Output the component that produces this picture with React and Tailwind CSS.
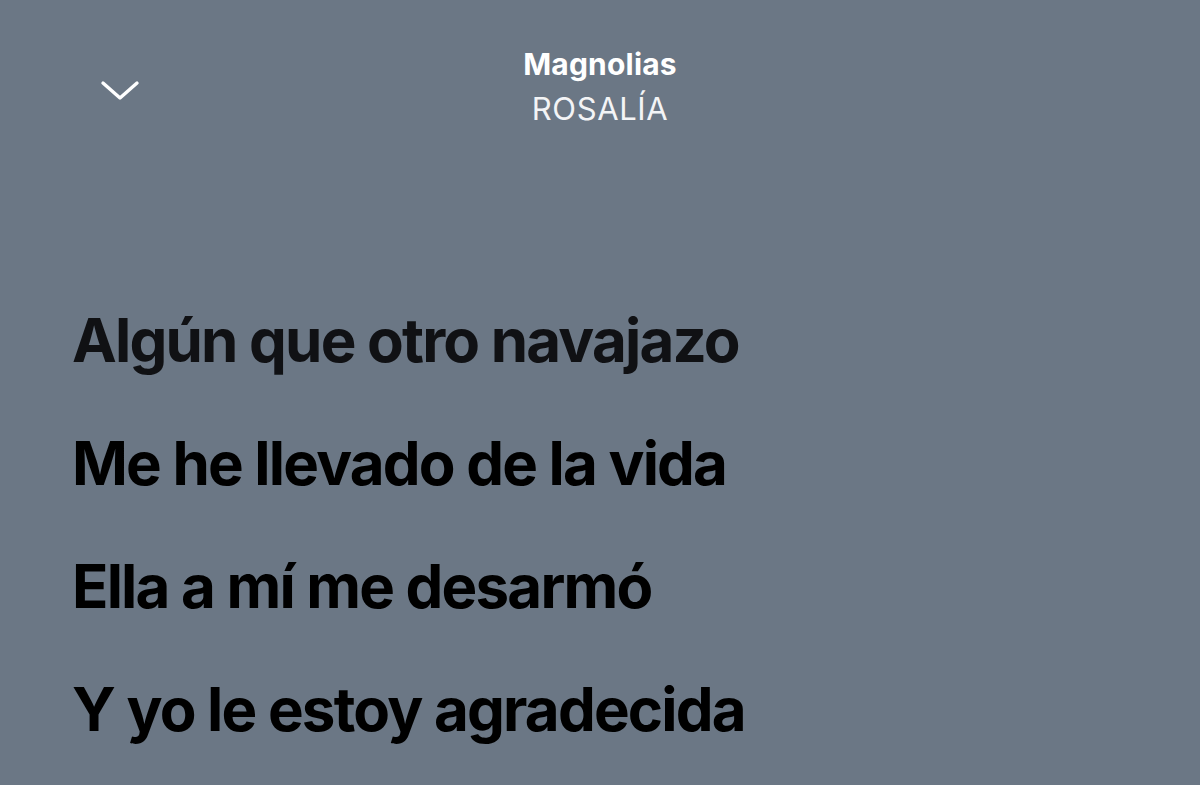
export default function App() {
  const lines = [
    "Algún que otro navajazo",
    "Me he llevado de la vida",
    "Ella a mí me desarmó",
    "Y yo le estoy agradecida",
  ];
  return (
    <div
      className="w-[1200px] h-[785px] overflow-hidden bg-[#6b7785] flex flex-col"
      style={{ fontFamily: "Inter, 'Noto Sans', sans-serif" }}
    >
      <header className="relative h-[140px] flex flex-col items-center pt-[45px]">
        <button className="absolute left-[98px] top-[72px] w-[44px] h-[36px] flex items-center justify-center">
          <svg width="42" height="26" viewBox="0 0 42 26" fill="none">
            <path d="M4 6 L21 21 L38 6" stroke="white" strokeWidth="3.4" strokeLinecap="round" strokeLinejoin="round" />
          </svg>
        </button>
        <div className="text-white font-bold text-[30px] leading-[38px] tracking-[0.2px]">Magnolias</div>
        <div className="text-[#f3f4f6] text-[31px] leading-[40px] mt-[6px] tracking-[0.6px]">ROSALÍA</div>
      </header>
      <main className="flex flex-col pl-[72px] pt-[170px] gap-[63px]">
        {lines.map((l, i) => (
          <p
            key={i}
            className={`text-[60px] leading-[60px] font-bold tracking-[-1.8px] ${i === 0 ? "text-[#101114]" : "text-black"}`}
          >
            {l}
          </p>
        ))}
      </main>
    </div>
  );
}
